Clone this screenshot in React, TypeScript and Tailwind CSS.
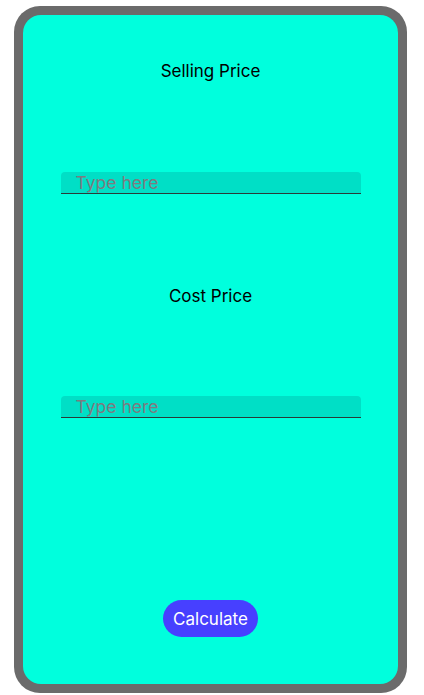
import React from "react";

export default function App() {
  return (
    <div className="w-[424px] h-[695px] bg-white pt-[6px] pl-[14px]" style={{ fontFamily: "Inter, 'Noto Sans', sans-serif" }}>
      <div className="w-[393px] h-[687px] rounded-[26px] bg-[#6b6b6b] p-[9px]">
        <div className="h-full w-full rounded-[18px] bg-[#00ffdd] flex flex-col items-center">
          <div className="mt-[46px] text-[17px] leading-[20px] text-black">Selling Price</div>
          <div className="mt-[91px] w-[300px] h-[22px] rounded-t-[4px] bg-[#00dfc6] border-b border-[#2a3a38] flex items-end pl-[15px]">
            <span className="text-[17.5px] leading-[20px] text-[#7d7b80]">Type here</span>
          </div>
          <div className="mt-[92px] text-[17px] leading-[20px] text-black">Cost Price</div>
          <div className="mt-[90px] w-[300px] h-[22px] rounded-t-[4px] bg-[#00dfc6] border-b border-[#2a3a38] flex items-end pl-[15px]">
            <span className="text-[17.5px] leading-[20px] text-[#7d7b80]">Type here</span>
          </div>
          <button className="mt-[182px] h-[37px] px-[10px] rounded-full bg-[#4740ff] text-white text-[17px] leading-[20px]">Calculate</button>
        </div>
      </div>
    </div>
  );
}
